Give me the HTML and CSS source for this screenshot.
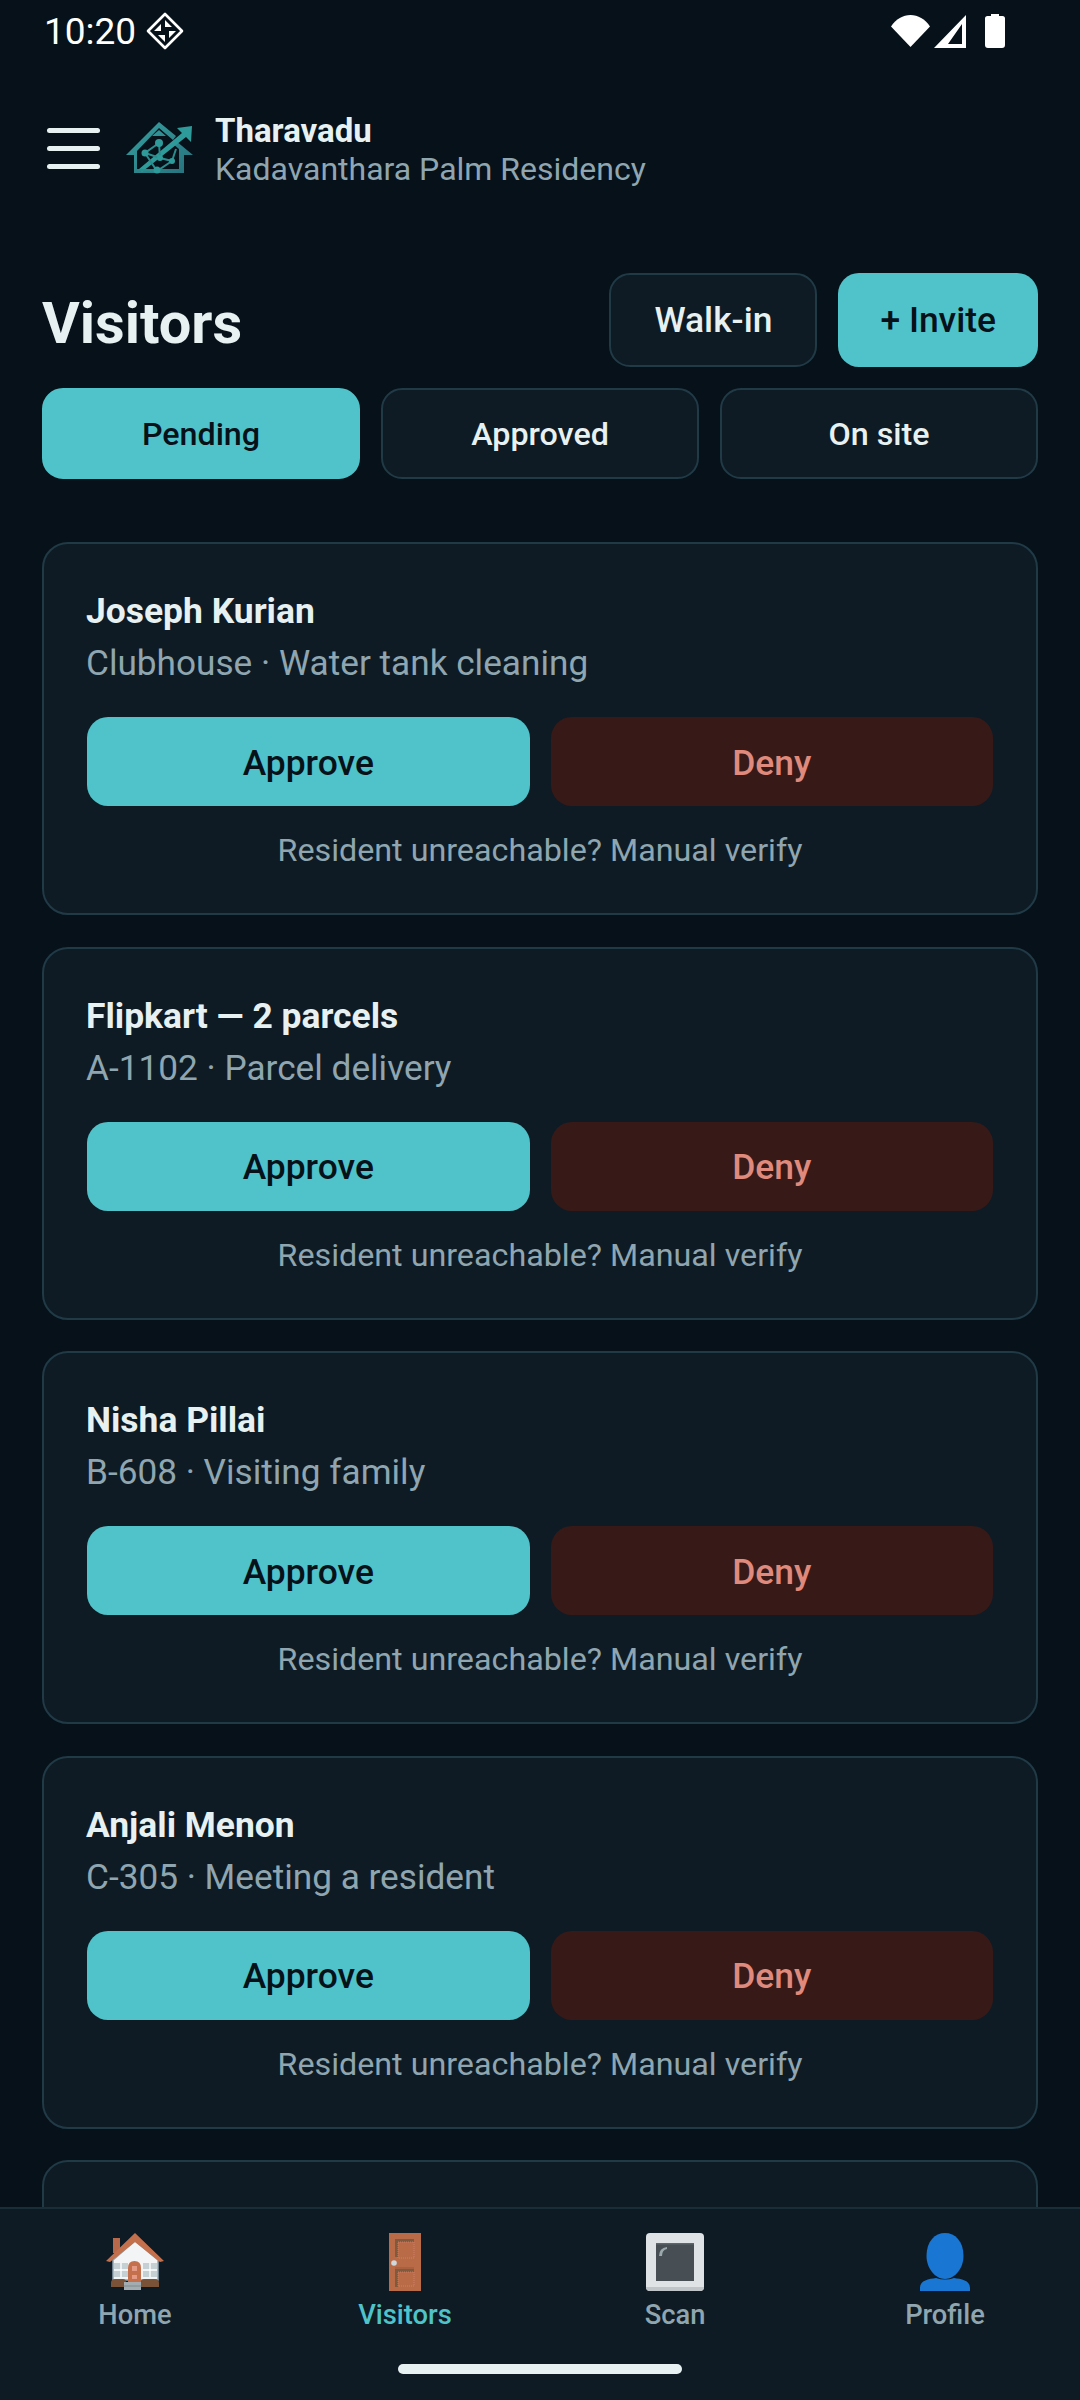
FILE: index.html
```html
<!DOCTYPE html>
<html>
<head>
    <link rel="stylesheet" href="styles.css">
</head>
<body>
    <div id="app">
        <!-- Status Bar -->
        <div class="status-bar">
            <div class="status-left">
                <span class="status-time">10:20</span>
                <svg class="status-badge" viewBox="0 0 38 38">
                    <path d="M19 2 36 19 19 36 2 19Z" fill="none" stroke="#fff" stroke-width="2.600" stroke-linejoin="round"/>
                    <path d="M19 8 26 15H19ZM30 19 23 26V19ZM19 30 12 23H19ZM8 19 15 12V19Z" fill="#fff"/>
                </svg>
            </div>
            <div class="status-right">
                <svg class="status-wifi" viewBox="0 0 39 32"><path d="M0 11.500C5 4 12 0 19.500 0S34 4 39 11.500L19.500 32Z" fill="#fff"/></svg>
                <svg class="status-signal" viewBox="0 0 32 33"><path d="M32 0V33H0ZM28 9 14 29H28Z" fill="#fff" fill-rule="evenodd"/></svg>
                <svg class="status-battery" viewBox="0 0 20 34"><path d="M6 0H14V2H17.500Q20 2 20 4.500V31Q20 34 17 34H3Q0 34 0 31V4.500Q0 2 2.500 2H6Z" fill="#fff"/></svg>
            </div>
        </div>

        <!-- Header -->
        <div class="app-header">
            <div class="menu-btn"><span></span><span></span><span></span></div>
            <svg class="logo" viewBox="0 0 68 52">
                <defs>
                    <linearGradient id="logo-fill" x1="0" y1="0" x2="1" y2="1">
                        <stop offset="0" stop-color="#35a19f"/>
                        <stop offset="1" stop-color="#27707c"/>
                    </linearGradient>
                </defs>
                <!-- roof, walls, inner gable -->
                <path d="M0 33 33 0 50 14 47 18 33 6 11 29V47H53V27L47 22 50 19 67 33H58V51H8V33ZM33 8 40 14H26Z" fill="url(#logo-fill)" fill-rule="evenodd"/>
                <!-- arrow -->
                <path d="M51 6 66 4 65 20 60 15 16 50 13 47 56 11Z" fill="#2f9a9a"/>
                <!-- network -->
                <g fill="none" stroke="#2b8c8e" stroke-width="2">
                    <path d="M33 21 19 31 34 36 46 39 31 49 19 31M33 21 34 36M46 39 50 27M14 48 31 49"/>
                </g>
                <g fill="#2f9a9a">
                    <circle cx="33" cy="21" r="4"/><circle cx="19" cy="31" r="3.500"/><circle cx="34" cy="36" r="3"/><circle cx="46" cy="39" r="3"/><circle cx="31" cy="48" r="3.500"/>
                </g>
            </svg>
            <div class="app-title">
                <div class="app-name">Tharavadu</div>
                <div class="app-sub">Kadavanthara Palm Residency</div>
            </div>
        </div>

        <!-- Title Row -->
        <div class="page-head">
            <h1 class="page-title">Visitors</h1>
            <div class="head-actions">
                <button class="btn btn-outline">Walk-in</button>
                <button class="btn btn-teal">+ Invite</button>
            </div>
        </div>

        <!-- Tabs -->
        <div class="tabs">
            <button class="tab tab-active">Pending</button>
            <button class="tab">Approved</button>
            <button class="tab">On site</button>
        </div>

        <!-- Visitor Cards -->
        <div class="card-list">
            <div class="card">
                <div class="card-name">Joseph Kurian</div>
                <div class="card-sub">Clubhouse · Water tank cleaning</div>
                <div class="card-actions">
                    <button class="action action-approve">Approve</button>
                    <button class="action action-deny">Deny</button>
                </div>
                <div class="card-link">Resident unreachable? Manual verify</div>
            </div>
            <div class="card">
                <div class="card-name">Flipkart — 2 parcels</div>
                <div class="card-sub">A-1102 · Parcel delivery</div>
                <div class="card-actions">
                    <button class="action action-approve">Approve</button>
                    <button class="action action-deny">Deny</button>
                </div>
                <div class="card-link">Resident unreachable? Manual verify</div>
            </div>
            <div class="card">
                <div class="card-name">Nisha Pillai</div>
                <div class="card-sub">B-608 · Visiting family</div>
                <div class="card-actions">
                    <button class="action action-approve">Approve</button>
                    <button class="action action-deny">Deny</button>
                </div>
                <div class="card-link">Resident unreachable? Manual verify</div>
            </div>
            <div class="card">
                <div class="card-name">Anjali Menon</div>
                <div class="card-sub">C-305 · Meeting a resident</div>
                <div class="card-actions">
                    <button class="action action-approve">Approve</button>
                    <button class="action action-deny">Deny</button>
                </div>
                <div class="card-link">Resident unreachable? Manual verify</div>
            </div>
            <div class="card"></div>
        </div>

        <!-- Bottom Nav -->
        <div class="bottom-nav">
            <div class="nav-items">
                <div class="nav-item">
                    <svg class="nav-icon" viewBox="0 0 58 58">
                        <path d="M7 5H14V20H7Z" fill="#b9694a"/>
                        <path d="M7 27 29 8 52 27V47H7Z" fill="#f2f4f5" stroke="#90a4ae" stroke-width="1.500"/>
                        <path d="M0 28 29 0 58 28 54 29 29 9 4 29Z" fill="#c4704c"/>
                        <path d="M8 30H22V44H8ZM37 30H51V44H37Z" fill="#c5d0d4"/>
                        <path d="M15 30V44M8 37H22M44 30V44M37 37H51" stroke="#fff" stroke-width="1.300"/>
                        <path d="M22 49V35Q22 28 28.500 28T35 35V49Z" fill="#c4704c"/>
                        <path d="M26 33H31V38H26ZM26 42H31V46H26Z" fill="#e59a86"/>
                        <path d="M5 54V50Q5 46 9 46H17Q20 46 20 49V54ZM35 54V49Q35 46 38 46H49Q53 46 53 50V54Z" fill="#7a5238"/>
                        <path d="M18 49H35V57H18Z" fill="#a3adb1"/>
                        <path d="M18 53H35" stroke="#7f8a8f"/>
                    </svg>
                    <span class="nav-label">Home</span>
                </div>
                <div class="nav-item nav-active">
                    <svg class="nav-icon nav-door" viewBox="0 0 32 58">
                        <rect width="32" height="58" fill="#b96a47"/>
                        <path d="M6 6H25V9H9V24H6ZM6 36H25V39H9V54H6Z" fill="#7f5a3f"/>
                        <path d="M9 9H25V25H9ZM9 39H25V53H9Z" fill="#b96a47" stroke="#d98a76" stroke-width=".700" stroke-dasharray="1 1"/>
                        <path d="M6 34H25V36H6Z" fill="#a96240"/>
                        <circle cx="5" cy="30" r="2.800" fill="#cfd8dc"/>
                    </svg>
                    <span class="nav-label">Visitors</span>
                </div>
                <div class="nav-item">
                    <svg class="nav-icon" viewBox="0 0 58 58">
                        <rect width="58" height="58" rx="4" fill="#dfe3e5"/>
                        <path d="M0 54Q0 58 4 58H54Q58 58 58 54V54H0Z" fill="#bfc5c8"/>
                        <rect x="10" y="10" width="38" height="38" fill="#474f54"/>
                        <rect x="10" y="10" width="38" height="1.500" fill="#5c666b"/>
                        <path d="M13 23Q13 15 21 14V16Q16 17 16 23Z" fill="#9aa7ac"/>
                    </svg>
                    <span class="nav-label">Scan</span>
                </div>
                <div class="nav-item">
                    <svg class="nav-icon nav-person" viewBox="0 0 50 58">
                        <path d="M25 0C35 0 43.500 8 43.500 23C43.500 35 35 46 25 46S6.500 35 6.500 23C6.500 8 15 0 25 0Z" fill="#1976d2"/>
                        <path d="M0 58V55C0 47 9 46 16 45Q25 48 34 45C41 46 50 47 50 55V58Z" fill="#1976d2"/>
                    </svg>
                    <span class="nav-label">Profile</span>
                </div>
            </div>
            <div class="home-bar"></div>
        </div>
    </div>
</body>
</html>
```

FILE: styles.css
```css
/* Global Styles */
* {
    box-sizing: border-box;
}

body {
    margin: 0;
    background-color: #06111a;
    color: #e8f1f2;
    font-family: Roboto, "Liberation Sans", sans-serif;
}

#app {
    display: flex;
    flex-direction: column;
    width: 1080px;
    height: 2400px;
    overflow: hidden;
}

button {
    font-family: inherit;
    cursor: pointer;
}

/* Status Bar */
.status-bar {
    display: flex;
    justify-content: space-between;
    align-items: center;
    flex: none;
    height: 62px;
    padding: 0 75px 0 44px;
}

.status-left {
    display: flex;
    align-items: center;
    gap: 10px;
}

.status-time {
    font-size: 37px;
    color: #fff;
}

.status-badge {
    width: 38px;
    height: 38px;
}

.status-right {
    display: flex;
    align-items: center;
}

.status-wifi {
    width: 39px;
    height: 32px;
}

.status-signal {
    width: 32px;
    height: 33px;
    margin-left: 4px;
}

.status-battery {
    width: 20px;
    height: 34px;
    margin-left: 19px;
}

/* Header */
.app-header {
    display: flex;
    align-items: center;
    flex: none;
    height: 76px;
    margin-top: 48px;
    padding-left: 47px;
}

.menu-btn {
    display: flex;
    flex-direction: column;
    gap: 13px;
    width: 53px;
}

.menu-btn span {
    height: 5px;
    background-color: #e8f1f2;
    border-radius: 3px;
}

.logo {
    width: 68px;
    height: 52px;
    margin-left: 26px;
}

.app-title {
    margin-left: 21px;
    padding-top: 3px;
}

.app-name {
    font-size: 33px;
    font-weight: 700;
    line-height: 39px;
}

.app-sub {
    font-size: 32px;
    line-height: 39px;
    color: #8fa6b0;
}

/* Title Row */
.page-head {
    display: flex;
    justify-content: space-between;
    align-items: center;
    flex: none;
    margin-top: 87px;
    padding: 0 42px;
}

.page-title {
    margin: 0;
    padding-top: 6px;
    font-size: 57.750px;
    font-weight: 700;
}

.head-actions {
    display: flex;
    gap: 21px;
}

.btn {
    height: 94px;
    padding: 0 42px;
    font-size: 35.440px;
    font-weight: 500;
    border-radius: 21px;
}

.btn-outline {
    padding: 0 43px;
    background-color: #0e1b24;
    color: #e8f1f2;
    border: 2px solid #203a46;
}

.btn-teal {
    background-color: #4fc3c9;
    color: #06111a;
    border: none;
}

/* Tabs */
.tabs {
    display: grid;
    grid-template-columns: repeat(3, 1fr);
    gap: 21px;
    flex: none;
    margin-top: 21px;
    padding: 0 42px;
}

.tab {
    height: 91px;
    font-size: 32.250px;
    font-weight: 500;
    background-color: #0e1b24;
    color: #e8f1f2;
    border: 2px solid #203a46;
    border-radius: 21px;
}

.tab-active {
    background-color: #4fc3c9;
    color: #06111a;
    border-color: #4fc3c9;
}

/* Visitor Cards */
.card-list {
    display: flex;
    flex-direction: column;
    gap: 31.500px;
    flex: 1;
    min-height: 0;
    overflow: hidden;
    margin-top: 63px;
    padding: 0 42px;
}

.card {
    flex: none;
    height: 373px;
    padding: 46px 43px 0;
    background-color: #0e1b24;
    border: 2px solid #203a46;
    border-radius: 26px;
}

.card-name {
    margin-left: -1px;
    font-size: 35.440px;
    font-weight: 700;
    line-height: 42px;
}

.card-sub {
    margin-top: 9px;
    margin-left: -1px;
    font-size: 35.200px;
    line-height: 44px;
    color: #8fa6b0;
}

.card-actions {
    display: grid;
    grid-template-columns: 1fr 1fr;
    gap: 21px;
    margin-top: 32px;
}

.action {
    height: 89px;
    padding: 2px 0 0;
    font-size: 35.440px;
    font-weight: 500;
    border: none;
    border-radius: 21px;
}

.action-approve {
    background-color: #4fc3c9;
    color: #06111a;
}

.action-deny {
    background-color: #371a18;
    color: #df8a7c;
}

.card-link {
    margin-top: 24px;
    font-size: 32.250px;
    line-height: 40px;
    text-align: center;
    color: #8fa6b0;
}

/* Bottom Nav */
.bottom-nav {
    flex: none;
    height: 193px;
    background-color: #0e1b24;
    border-top: 2px solid #1a2e38;
}

.nav-items {
    display: grid;
    grid-template-columns: repeat(4, 1fr);
    padding-top: 24px;
}

.nav-item {
    display: flex;
    flex-direction: column;
    align-items: center;
    color: #8fa6b0;
}

.nav-active {
    color: #4fc3c9;
}

.nav-icon {
    width: 58px;
    height: 58px;
}

.nav-door {
    width: 32px;
}

.nav-person {
    width: 50px;
}

.nav-label {
    margin-top: 7px;
    font-size: 27.300px;
    font-weight: 500;
    line-height: 34px;
}

.home-bar {
    width: 284px;
    height: 10px;
    margin: 32px auto 0;
    background-color: #e8f1f2;
    border-radius: 5px;
}
```
